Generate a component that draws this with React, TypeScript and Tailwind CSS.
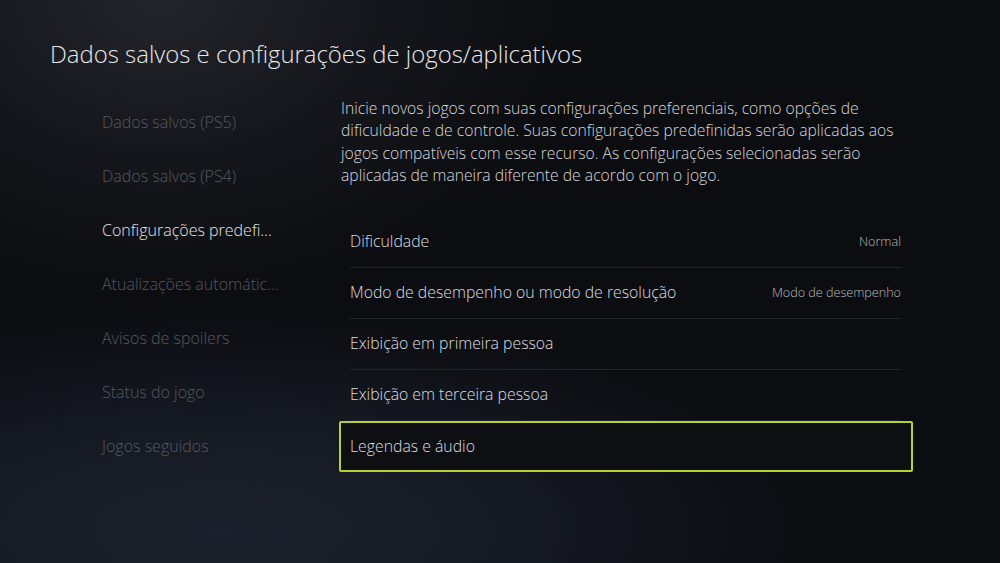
const menu = [
  { label: "Dados salvos (PS5)", active: false },
  { label: "Dados salvos (PS4)", active: false },
  { label: "Configurações predefi...", active: true },
  { label: "Atualizações automátic...", active: false },
  { label: "Avisos de spoilers", active: false },
  { label: "Status do jogo", active: false },
  { label: "Jogos seguidos", active: false },
];

const rows = [
  { label: "Dificuldade", value: "Normal" },
  { label: "Modo de desempenho ou modo de resolução", value: "Modo de desempenho" },
  { label: "Exibição em primeira pessoa" },
  { label: "Exibição em terceira pessoa" },
];

const description = [
  "Inicie novos jogos com suas configurações preferenciais, como opções de",
  "dificuldade e de controle. Suas configurações predefinidas serão aplicadas aos",
  "jogos compatíveis com esse recurso. As configurações selecionadas serão",
  "aplicadas de maneira diferente de acordo com o jogo.",
];

export default function App() {
  return (
    <div
      className="relative w-[1000px] h-[563px] overflow-hidden bg-[#0c0d11] text-[#e4e4e6]"
      style={{ fontFamily: '"Open Sans", "Noto Sans", sans-serif' }}
    >
      {/* backdrop glows */}
      <div className="pointer-events-none absolute inset-0 bg-[radial-gradient(ellipse_420px_300px_at_160px_0px,#24252b_0%,#17181d_45%,transparent_100%)]" />
      <div className="pointer-events-none absolute inset-0 bg-[radial-gradient(ellipse_600px_220px_at_220px_530px,#1b212c_0%,#151922_50%,transparent_100%)]" />

      <div className="relative flex flex-col">
        <h1 className="pl-[50px] pt-[38px] text-[23.9px] font-light leading-[32px] text-[#e6e6e8] whitespace-nowrap">
          Dados salvos e configurações de jogos/aplicativos
        </h1>

        <div className="mt-[27px] flex">
          <ul className="w-[339px] shrink-0 pl-[102px] pt-[13px]">
            {menu.map((m) => (
              <li
                key={m.label}
                className={`h-[54px] text-[16px] font-light leading-[24px] whitespace-nowrap ${
                  m.active ? "text-[#e2e3e6]" : "text-[#55585e]"
                }`}
              >
                {m.label}
              </li>
            ))}
          </ul>

          <div className="w-[574px] flex flex-col">
            <p className="pl-[2px] text-[15.7px] font-light leading-[22.3px] text-[#d6d7da] whitespace-nowrap">
              {description.map((line) => (
                <span key={line} className="block">
                  {line}
                </span>
              ))}
            </p>

            <div className="mt-[31px] flex flex-col">
              {rows.map((r) => (
                <div
                  key={r.label}
                  className="ml-[11px] mr-[12px] flex h-[51px] items-center justify-between border-b border-[#23252a]"
                >
                  <span className="text-[15.8px] font-light text-[#dcdde0]">{r.label}</span>
                  {r.value && <span className="text-[12.6px] font-light text-[#b9bbbf]">{r.value}</span>}
                </div>
              ))}
              <div className="flex h-[51px] items-center rounded-[2px] border-2 border-[#b8d030] bg-[#0d0f13] pl-[9px]">
                <span className="text-[15.8px] font-light text-[#dcdde0]">Legendas e áudio</span>
              </div>
            </div>
          </div>
        </div>
      </div>
    </div>
  );
}
